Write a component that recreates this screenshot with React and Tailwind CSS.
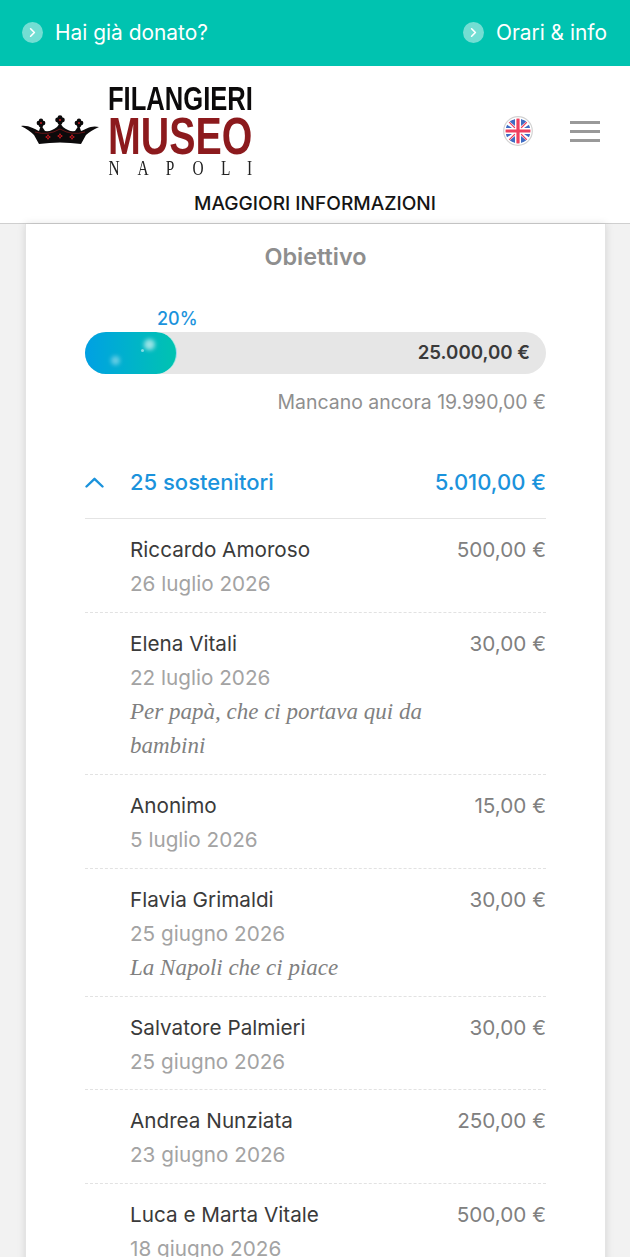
import React from "react";
import { ChevronRight } from "lucide-react";

const donors = [
  { name: "Riccardo Amoroso", date: "26 luglio 2026", amount: "500,00 €" },
  { name: "Elena Vitali", date: "22 luglio 2026", amount: "30,00 €", note: "Per papà, che ci portava qui da bambini" },
  { name: "Anonimo", date: "5 luglio 2026", amount: "15,00 €" },
  { name: "Flavia Grimaldi", date: "25 giugno 2026", amount: "30,00 €", note: "La Napoli che ci piace" },
  { name: "Salvatore Palmieri", date: "25 giugno 2026", amount: "30,00 €" },
  { name: "Andrea Nunziata", date: "23 giugno 2026", amount: "250,00 €" },
  { name: "Luca e Marta Vitale", date: "18 giugno 2026", amount: "500,00 €" },
];

function TopLink({ label }) {
  return (
    <div className="flex items-center gap-[12px]">
      <span className="flex h-[21px] w-[21px] items-center justify-center rounded-full bg-white/45">
        <ChevronRight size={15} strokeWidth={2.6} className="text-white" />
      </span>
      <span className="text-[20.9px] text-white">{label}</span>
    </div>
  );
}

function Trefoil({ x, y, r }) {
  return (
    <g fill="#0c0a0b">
      <circle cx={x} cy={y - r} r={r} />
      <circle cx={x - r} cy={y} r={r} />
      <circle cx={x + r} cy={y} r={r} />
      <circle cx={x} cy={y + r} r={r} />
    </g>
  );
}

function RedCluster({ x, y }) {
  return (
    <g fill="#c0181f">
      <circle cx={x} cy={y - 1.5} r="1" />
      <circle cx={x - 1.5} cy={y} r="1" />
      <circle cx={x + 1.5} cy={y} r="1" />
      <circle cx={x} cy={y + 1.5} r="1" />
    </g>
  );
}

function Crown() {
  return (
    <svg width="78" height="30" viewBox="0 0 78 30" className="mb-[2px]">
      <Trefoil x={39} y={5} r={2.4} />
      <Trefoil x={20} y={8} r={2.2} />
      <Trefoil x={58} y={8} r={2.2} />
      <path
        d="M0 11 C8 10 13 14 18 16 L20 10 L24 16 Q30 17 36 12 L39 8 L42 12 Q48 17 54 16 L58 10 L60 16 C65 14 70 10 78 12 C72 15 68 17 65 20 L60 29 Q39 26 18 29 L13 20 C10 17 6 14 0 11 Z"
        fill="#0c0a0b"
      />
      <circle cx="39" cy="5" r="1.1" fill="#c0181f" />
      <circle cx="20" cy="8" r="1" fill="#c0181f" />
      <circle cx="58" cy="8" r="1" fill="#c0181f" />
      <path d="M14 17 Q27 21 39 14 Q51 21 64 17" fill="none" stroke="#8c1a1d" strokeWidth="0.7" />
      <RedCluster x={27} y={22} />
      <RedCluster x={39} y={21} />
      <RedCluster x={51} y={22} />
    </svg>
  );
}

function Flag() {
  return (
    <svg width="30" height="30" viewBox="0 0 30 30">
      <defs>
        <clipPath id="flag-clip">
          <circle cx="15" cy="15" r="12.5" />
        </clipPath>
      </defs>
      <circle cx="15" cy="15" r="14.3" fill="#fff" stroke="#d2d2d2" strokeWidth="1.2" />
      <g clipPath="url(#flag-clip)">
        <rect x="2" y="2" width="26" height="26" fill="#fff" />
        <path d="M12 3 V10 L6 5 Z M18 3 V10 L24 5 Z M12 27 V20 L6 25 Z M18 27 V20 L24 25 Z M3 12 H9 L3 8 Z M27 12 H21 L27 8 Z M3 18 H9 L3 22 Z M27 18 H21 L27 22 Z" fill="#3f6cc4" />
        <path d="M3 3 L12 12 M27 3 L18 12 M3 27 L12 18 M27 27 L18 18" stroke="#ef4060" strokeWidth="1.2" />
        <path d="M15 2 V28 M2 15 H28" stroke="#fff" strokeWidth="5" />
        <path d="M15 2 V28 M2 15 H28" stroke="#ef4060" strokeWidth="3.2" />
      </g>
    </svg>
  );
}

function Logo() {
  return (
    <div className="flex h-[96px] w-[146px] flex-col">
      <div className="h-[30px] origin-left scale-x-[0.752] whitespace-nowrap font-['Liberation_Sans'] text-[34px] leading-[30px] font-bold text-[#0c0a0b]">
        FILANGIERI
      </div>
      <div className="mt-[1px] h-[44px] origin-left scale-x-[0.757] whitespace-nowrap font-['Liberation_Sans'] text-[52px] leading-[44px] font-bold text-[#8c1a1d]">
        MUSEO
      </div>
      <div className="-ml-[2px] mt-[1px] flex justify-between pr-[1px] font-['Liberation_Serif'] text-[22px] leading-[18px] text-[#222]">
        {"NAPOLI".split("").map((c, i) => (
          <span key={i} className="inline-block scale-x-[0.7]">{c}</span>
        ))}
      </div>
    </div>
  );
}

function DonorRow({ donor, last }) {
  return (
    <div className={`flex items-start justify-between pb-[10.6px] pt-[14px] ${last ? "" : "border-b border-dashed border-[#e2e2e2]"}`}>
      <div className="w-[350px] pl-[45px]">
        <div className="text-[20.7px] leading-[34px] text-[#3a3a3a]">{donor.name}</div>
        <div className="text-[20.7px] leading-[34px] text-[#a3a3a3]">{donor.date}</div>
        {donor.note && (
          <div className="font-['Liberation_Serif'] text-[23px] leading-[34.5px] italic text-[#808080]">
            {donor.note}
          </div>
        )}
      </div>
      <div className="text-[20.7px] leading-[34px] text-[#808080]">{donor.amount}</div>
    </div>
  );
}

export default function App() {
  return (
    <div className="flex h-[1257px] flex-col overflow-hidden bg-[#f2f2f2] font-['Inter',sans-serif]">
      <div className="flex h-[66px] shrink-0 items-center justify-between bg-[#00c3b0] pl-[22px] pr-[23px]">
        <TopLink label="Hai già donato?" />
        <TopLink label="Orari & info" />
      </div>

      <header className="shrink-0 border-b border-[#cfcfcf] bg-white">
        <div className="flex items-center justify-between pl-[21px] pr-[30px] pt-[17px]">
          <div className="flex items-center gap-[9px]">
            <Crown />
            <Logo />
          </div>
          <div className="flex items-center gap-[37px]">
            <Flag />
            <div className="flex w-[30px] flex-col gap-[6px]">
              <span className="h-[3px] bg-[#999]" />
              <span className="h-[3px] bg-[#999]" />
              <span className="h-[3px] bg-[#999]" />
            </div>
          </div>
        </div>
        <div className="pb-[7px] pt-[11px] text-center text-[19.1px] leading-[26px] font-medium text-[#151515]">
          MAGGIORI INFORMAZIONI
        </div>
      </header>

      <main className="ml-[25px] mr-[24px] flex-1 border-x border-[#e4e4e4] bg-white px-[59px] shadow-[0_0_8px_rgba(0,0,0,0.12)]">
        <h2 className="pt-[16px] text-center text-[23.4px] leading-[34px] font-semibold text-[#8e8e8e]">Obiettivo</h2>

        <div className="mt-[32px] pl-[72px] text-[18px] leading-[26px] font-medium text-[#1b93dc]">20%</div>
        <div className="relative flex h-[42px] items-center justify-end rounded-[21px] bg-[#e6e6e6] pr-[16px] text-[18.7px] font-semibold text-[#3a3a3a]">
          <div className="absolute inset-y-0 left-0 w-[92px] overflow-hidden rounded-[21px] border-r border-white/60 bg-gradient-to-r from-[#00a0e3] to-[#00c3b0]">
            <span className="absolute left-[26px] top-[24px] h-[9px] w-[9px] rounded-full bg-white/40 blur-[2px]" />
            <span className="absolute left-[59px] top-[7px] h-[11px] w-[11px] rounded-full bg-white/60 blur-[2px]" />
            <span className="absolute left-[56px] top-[17px] h-[3px] w-[3px] rounded-full bg-white/50" />
          </div>
          25.000,00 €
        </div>
        <div className="mt-[14px] text-right text-[19.45px] leading-[28px] text-[#8f8f8f]">Mancano ancora 19.990,00 €</div>

        <div className="mt-[30px] flex h-[73px] items-center justify-between border-b border-[#e4e4e4] pt-[1px] text-[22px] font-medium text-[#1b93dc]">
          <div className="flex items-center gap-[26px]">
            <svg width="19" height="11" viewBox="0 0 19 11" fill="none" stroke="currentColor" strokeWidth="2.4" strokeLinecap="round" strokeLinejoin="round">
              <path d="M1.5 9.5 L9.5 1.8 L17.5 9.5" />
            </svg>
            <span>25 sostenitori</span>
          </div>
          <span>5.010,00 €</span>
        </div>

        {donors.map((d, i) => (
          <DonorRow key={d.name} donor={d} last={i === donors.length - 1} />
        ))}
      </main>
    </div>
  );
}
